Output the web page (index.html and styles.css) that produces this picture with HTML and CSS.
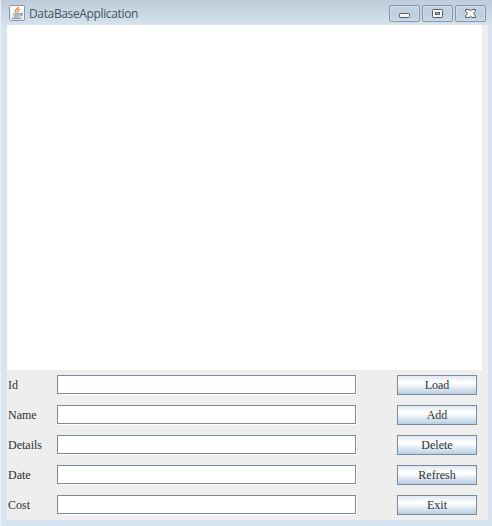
FILE: index.html
```html
<!DOCTYPE html>
<html lang="en">
<head>
<meta charset="utf-8">
<title>DataBaseApplication</title>
<link rel="stylesheet" href="styles.css">
</head>
<body>
<div class="window">
  <header class="titlebar">
    <svg class="app-icon" width="16" height="16" viewBox="0 0 16 16">
      <defs><linearGradient id="tile" x2="0" y2="1"><stop stop-color="#fff"/><stop offset="1" stop-color="#e4e6e8"/></linearGradient></defs>
      <rect x=".5" y=".5" width="15" height="15" rx="1" fill="url(#tile)" stroke="#8a97a6"/>
      <path d="M9.2 2C9.4 3.8 5.6 4.4 6.4 6.2L7.4 7.7M10.8 4C8.2 5 8.5 5.6 9 6.4Q9.2 7.2 8.6 7.8" fill="none" stroke="#e58a35" stroke-width="1.3"/>
      <path d="M4.3 9H10.8M5 11H10.3M11.2 8.6Q13.6 8.2 13 9.6Q12.5 10.7 11 11M3.2 13.2H11.8" fill="none" stroke="#64788c" stroke-width="1.1"/>
    </svg>
    <h1 class="title">DataBaseApplication</h1>
    <div class="controls">
      <button class="control" aria-label="Minimize"><svg width="29" height="15" viewBox="0 0 29 15"><rect x="9.5" y="7.5" width="10" height="4" rx=".8" fill="#f7f7f7" stroke="#555a69"/></svg></button>
      <button class="control" aria-label="Maximize"><svg width="29" height="15" viewBox="0 0 29 15"><rect x="9.5" y="3.5" width="10" height="8" rx=".8" fill="#f7f7f7" stroke="#555a69"/><rect x="12.5" y="6.5" width="4" height="2" fill="#b8c7d8" stroke="#555a69"/></svg></button>
      <button class="control" aria-label="Close"><svg width="29" height="15" viewBox="0 0 29 15"><path d="M9.5 3.5H13L14.5 4.8L16 3.5H19.5V5L17.4 7.5L19.5 10V11.5H16L14.5 10.2L13 11.5H9.5V10L11.6 7.5L9.5 5Z" fill="#f7f7f7" stroke="#555a69"/></svg></button>
    </div>
  </header>
  <main class="content">
    <div class="table-area"></div>
    <form class="form">
      <div class="row"><label class="label" for="id">Id</label><input class="field" id="id"><button class="action" type="button">Load</button></div>
      <div class="row"><label class="label" for="name">Name</label><input class="field" id="name"><button class="action" type="button">Add</button></div>
      <div class="row"><label class="label" for="details">Details</label><input class="field" id="details"><button class="action" type="button">Delete</button></div>
      <div class="row"><label class="label" for="date">Date</label><input class="field" id="date"><button class="action" type="button">Refresh</button></div>
      <div class="row"><label class="label" for="cost">Cost</label><input class="field" id="cost"><button class="action" type="button">Exit</button></div>
    </form>
  </main>
</div>
</body>
</html>
```
FILE: styles.css
```css
* { box-sizing: border-box; }
body { margin: 0; overflow: hidden; }
.window {
  width: 492px;
  height: 526px;
  padding: 0 4px 6px 6px;
  border-left: 1px solid #e9f0f7;
  background: linear-gradient(#bfcddb 0, #c8d6e4 12px, #d5e2ef 25px, #d7e4f1 38px);
}
.titlebar {
  display: flex;
  height: 25px;
  padding: 5px 2px 0 2px;
}
.app-icon { flex: none; }
.title {
  width: 120px;
  margin: 0 0 0 4px;
  font: 400 12px/18px "Open Sans", "Noto Sans", sans-serif;
  letter-spacing: -0.36px;
  color: #465260;
}
.controls { display: flex; gap: 2px; margin-left: auto; }
.control {
  width: 31px;
  height: 17px;
  padding: 0;
  border: 1px solid #8494ab;
  border-radius: 2px;
  background: linear-gradient(#c5d3e2, #bfcede 50%, #c8d5e3);
  box-shadow: inset 0 0 0 1px #d0dce8;
}
.control svg { display: block; }
.content { height: 495px; background: #eee; }
.table-area { width: 475px; height: 345px; background: #fff; }
.form { display: grid; gap: 10px; padding-top: 5px; }
.row {
  display: grid;
  grid-template-columns: 50px 300px 80px;
  height: 20px;
}
.label {
  padding-left: 1px;
  font: 12px/20px "Liberation Serif", serif;
  color: #303030;
}
.field {
  width: 299px;
  height: 19px;
  padding: 0 3px;
  border: 1px solid #7a8a99;
  border-radius: 0;
  background: #fff;
  box-shadow: 1px 1px #fff;
}
.action {
  width: 80px;
  height: 20px;
  margin-left: 40px;
  padding: 0;
  border: 1px solid #7a8a99;
  background: linear-gradient(#dfe9f3, #fff 35%, #fff 40%, #b8cfe5);
  font: 12px/18px "Liberation Serif", serif;
  color: #303030;
}
```
